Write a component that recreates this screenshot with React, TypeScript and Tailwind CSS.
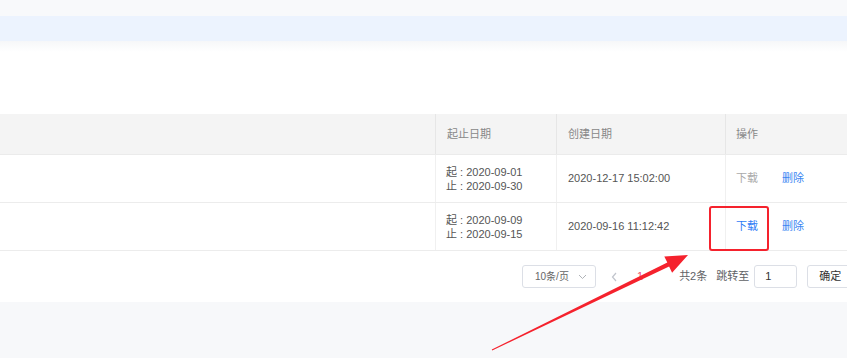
const font = { fontFamily: '"Liberation Sans", "Noto Sans CJK SC", sans-serif' };

const rows = [
  { start: '2020-09-01', end: '2020-09-30', created: '2020-12-17 15:02:00', canDownload: false },
  { start: '2020-09-09', end: '2020-09-15', created: '2020-09-16 11:12:42', canDownload: true },
];

export default function App() {
  return (
    <div className="relative w-[847px] h-[358px] overflow-hidden bg-[#f7f8fa]" style={font}>
      <div className="h-[16px] bg-[#f8f9fb]" />
      <div className="h-[25px] bg-[#ecf3fe]" />
      <div className="h-[11px] bg-gradient-to-b from-[#f6f7f9] to-white" />

      <div className="bg-white pt-[62px]">
        {/* header */}
        <div className="grid grid-cols-[436px_121px_169px_1fr] h-[41px] bg-[#f4f4f4] border-b border-[#ebebeb] text-[11px] text-[#888]">
          <div className="border-r border-[#e6e6e6]" />
          <div className="flex items-center pl-[11px] border-r border-[#e6e6e6]">起止日期</div>
          <div className="flex items-center pl-[11px] border-r border-[#e6e6e6]">创建日期</div>
          <div className="flex items-center pl-[10px]">操作</div>
        </div>

        {rows.map((r, i) => (
          <div
            key={i}
            className="grid grid-cols-[436px_121px_169px_1fr] h-[48px] border-b border-[#ececec] text-[11px] text-[#555]"
          >
            <div className="border-r border-[#f0f0f0]" />
            <div className="flex flex-col justify-center pl-[10px] leading-[14px] border-r border-[#f0f0f0] whitespace-nowrap">
              <span>起 : {r.start}</span>
              <span>止 : {r.end}</span>
            </div>
            <div className="flex items-center pl-[11px] border-r border-[#f0f0f0]">{r.created}</div>
            <div className="flex items-center pl-[10px] gap-[24px]">
              <span className={r.canDownload ? 'text-[#2f7cf6]' : 'text-[#aaa]'}>下载</span>
              <span className="text-[#3a86f2]">删除</span>
            </div>
          </div>
        ))}

        {/* pagination */}
        <div className="h-[51px] flex items-center pl-[522px] text-[11px] text-[#606266] whitespace-nowrap">
          <div className="shrink-0 w-[74px] h-[23px] border border-[#dcdfe6] rounded-[3px] flex items-center pl-[12px] text-[10px] text-[#666]">
            <span>10条/页</span>
            <svg className="ml-[9px]" width="9" height="6" viewBox="0 0 9 6" fill="none">
              <path d="M1 1l3.5 3.5L8 1" stroke="#b0b3b8" strokeWidth="1" />
            </svg>
          </div>
          <svg className="shrink-0 ml-[15px]" width="7" height="10" viewBox="0 0 7 10" fill="none">
            <path d="M5 1L1.5 5 5 9" stroke="#c0c4cc" strokeWidth="1.2" />
          </svg>
          <span className="shrink-0 ml-[19px] text-[#f0506e]">1</span>
          <span className="shrink-0 ml-[36px]">共2条</span>
          <span className="shrink-0 ml-[9px]">跳转至</span>
          <div className="shrink-0 ml-[5px] w-[43px] h-[23px] border border-[#dcdfe6] rounded-[3px] flex items-center pl-[10px] text-[#333]">1</div>
          <div className="shrink-0 ml-[10px] w-[50px] h-[23px] border border-[#dcdfe6] rounded-[3px] flex items-center pl-[11px] text-[#333]">确定</div>
        </div>
      </div>

      {/* annotation: red box */}
      <div className="absolute left-[709px] top-[206px] w-[60px] h-[45px] border-2 border-[#f5222d] rounded-[3px]" />

      {/* annotation: red arrow */}
      <svg className="absolute left-0 top-0" width="847" height="358" viewBox="0 0 847 358">
        <polygon
          points="491.8,349.6 667.3,262.6 664.3,256.5 688,255 672.1,272.7 669.1,266.6 492.2,350.4"
          fill="#f5222d"
        />
      </svg>
    </div>
  );
}
